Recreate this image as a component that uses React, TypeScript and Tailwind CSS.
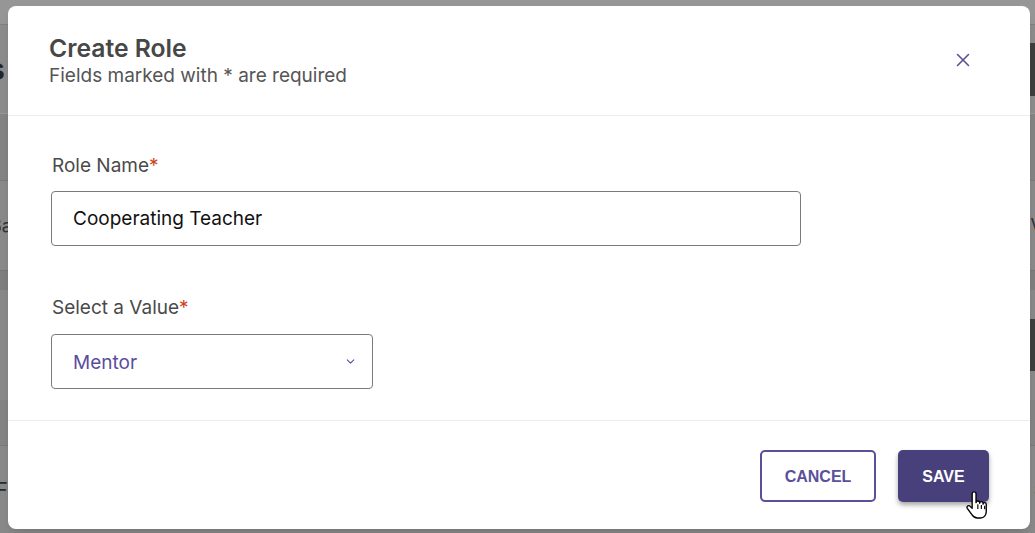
import React, { useState } from "react";
import { X, ChevronDown } from "lucide-react";

const font = "font-['Inter','Noto_Sans',sans-serif]";

function HandCursor() {
  return (
    <svg width="25" height="31" viewBox="0 0 22 27" className="absolute left-[965px] top-[490px] pointer-events-none">
      <path
        d="M8 1.5c1 0 1.7.7 1.7 1.7V11c0-1 .7-1.5 1.6-1.5s1.6.6 1.6 1.5v.5c0-.9.7-1.4 1.5-1.4s1.5.6 1.5 1.4v.8c0-.8.7-1.3 1.4-1.3s1.4.6 1.4 1.4V19c0 3-2 5.5-5 5.5h-3c-2.3 0-3.5-1.2-4.8-3.2L2 16c-.5-.8-.3-1.8.5-2.2s1.7-.1 2.3.7L6.3 16V3.2C6.3 2.2 7 1.5 8 1.5Z"
        fill="#ffffff"
        stroke="#000000"
        strokeWidth="1.2"
        strokeLinejoin="round"
      />
      <path d="M11.3 12.5v4M14.4 13v3.5M17.3 13.8v3" stroke="#000000" strokeWidth="1" />
    </svg>
  );
}

function Backdrop() {
  // dimmed page that sits behind the dialog
  return (
    <div className={`flex flex-col h-full ${font}`}>
      <div className="h-[25px] bg-[#969696] border-b border-[#808080]" />
      <div className="h-[88px] flex items-center justify-between bg-[#8d8d8d]">
        <span className="-ml-[12px] text-[30px] font-bold text-[#262626]">s</span>
        <div className="w-[40px] h-[53px] -mr-[10px] bg-[#3e3e3e]" />
      </div>
      <div className="h-[67px] bg-[#858585] border-t border-[#999999]" />
      <div className="h-[90px] flex items-center justify-between bg-[#8b8b8b] border-t border-[#7b7b7b]">
        <span className="-ml-[10px] text-[18px] text-[#333333]">Ba</span>
        <span className="-mr-[8px] text-[18px] text-[#333333]">V</span>
      </div>
      <div className="h-[20px] bg-[#7f7f7f] border-t border-[#767676]" />
      <div className="h-[110px] flex items-center justify-end bg-[#8a8a8a]">
        <div className="w-[40px] h-[52px] -mr-[10px] bg-[#3e3e3e]" />
      </div>
      <div className="h-[45px] bg-[#858585]" />
      <div className="flex-1 flex items-center justify-between bg-[#8a8a8a] border-t border-[#7b7b7b]">
        <span className="-ml-[4px] text-[20px] text-[#2b2b2b]">F</span>
        <span className="-mr-[8px] text-[14px] text-[#333333]">S</span>
      </div>
    </div>
  );
}

export default function App() {
  const [roleName, setRoleName] = useState("Cooperating Teacher");
  const [value, setValue] = useState("Mentor");

  return (
    <div className="relative h-[533px] w-full overflow-hidden bg-[#8c8c8c]">
      <Backdrop />

      {/* Dialog overlay */}
      <div className="absolute inset-0 pl-[8px] pt-[6px] pr-[5px] pb-[4px]">
        <div className={`h-full flex flex-col bg-white rounded-[8px] shadow-lg ${font}`}>
          {/* Header */}
          <div className="h-[110px] flex items-start justify-between pl-[41px] pr-[56px] pt-[26px] border-b border-[#ededed]">
            <div>
              <h2 className="text-[24.7px] leading-[32px] font-semibold text-[#474747]">Create Role</h2>
              <p className="text-[19px] leading-[24px] text-[#555555]">Fields marked with * are required</p>
            </div>
            <button className="mt-[17px] w-[22px] h-[22px] flex items-center justify-center text-[#5b4f9a]">
              <X size={24} strokeWidth={1.7} />
            </button>
          </div>

          {/* Body */}
          <div className="flex-1 flex flex-col pl-[43px] pt-[38px]">
            <label className="text-[19px] leading-[24px] text-[#4a4a4a] pl-[1px]">
              Role Name<span className="text-[#c9421a]">*</span>
            </label>
            <input
              value={roleName}
              onChange={(e) => setRoleName(e.target.value)}
              className="mt-[13px] w-[750px] h-[55px] px-[21px] border border-[#7a7a7a] rounded-[4px] text-[19px] text-[#111111] outline-none"
            />

            <label className="mt-[50px] text-[19px] leading-[24px] text-[#4a4a4a] pl-[1px]">
              Select a Value<span className="text-[#c9421a]">*</span>
            </label>
            <div className="relative mt-[14px] w-[322px] h-[55px]">
              <select
                value={value}
                onChange={(e) => setValue(e.target.value)}
                className="w-full h-full appearance-none bg-white pl-[21px] pr-[40px] pt-[4px] border border-[#7a7a7a] rounded-[4px] text-[19px] text-[#5a4e9c] outline-none"
              >
                <option>Mentor</option>
                <option>Supervisor</option>
                <option>Observer</option>
              </select>
              <ChevronDown
                size={13}
                strokeWidth={2}
                className="absolute right-[16px] top-[21px] text-[#5a4e9c] pointer-events-none"
              />
            </div>
          </div>

          {/* Footer */}
          <div className="h-[109px] flex items-start justify-end gap-[22px] pt-[29px] pr-[41px] border-t border-[#ededed]">
            <button className="w-[116px] h-[52px] pt-[2px] rounded-[5px] border-2 border-[#5b4f9a] bg-white text-[#5b4f9a] text-[16px] font-bold font-['Liberation_Sans',Arial,sans-serif]">
              CANCEL
            </button>
            <button className="w-[91px] h-[52px] pt-[2px] rounded-[5px] bg-[#48407a] text-white text-[16px] font-bold shadow-[0_3px_5px_rgba(0,0,0,0.35)] font-['Liberation_Sans',Arial,sans-serif]">
              SAVE
            </button>
          </div>
        </div>
      </div>

      <HandCursor />
    </div>
  );
}
